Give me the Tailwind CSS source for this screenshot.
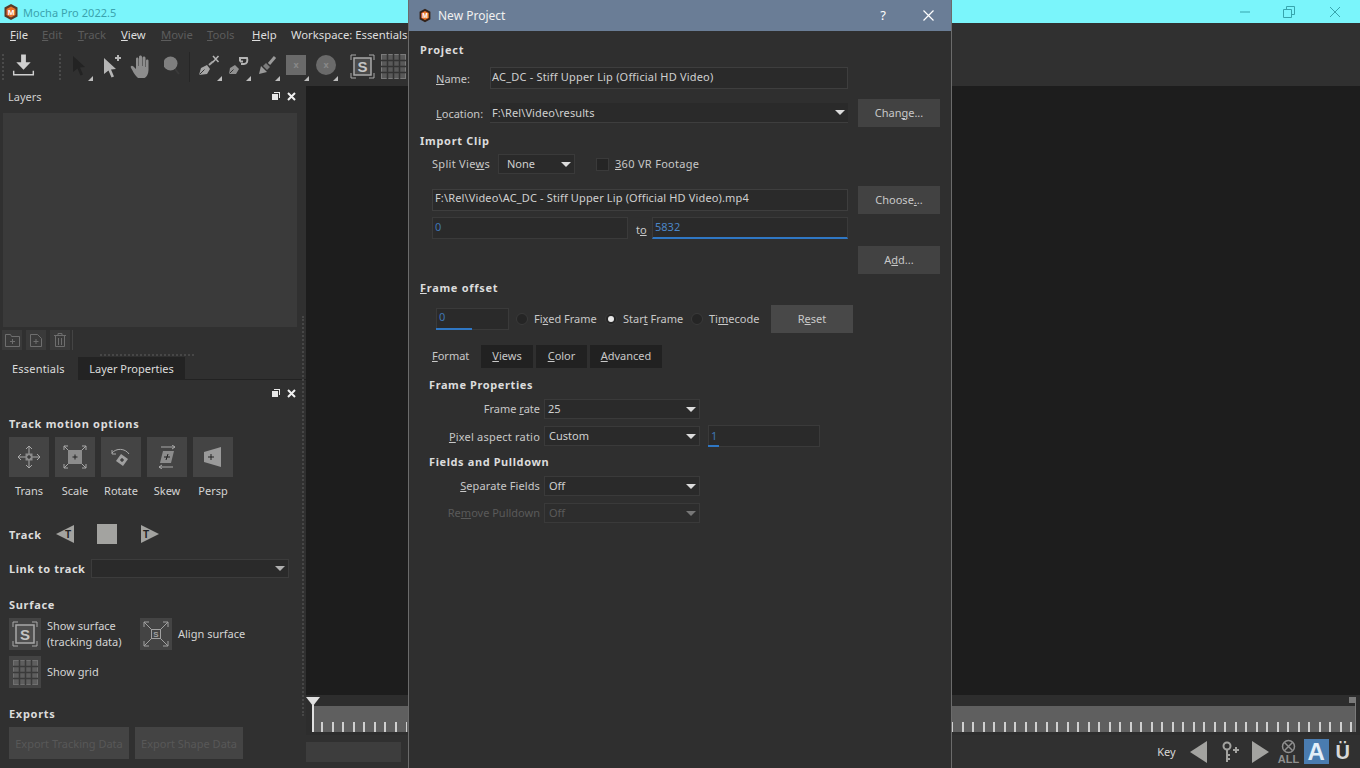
<!DOCTYPE html>
<html lang="en">
<head>
<meta charset="UTF-8">
<title>Mocha Pro 2022.5 - New Project</title>
<script src="https://cdn.jsdelivr.net/npm/@tailwindcss/browser@4"></script>
</head>
<body class="relative w-[1360px] h-[768px] overflow-hidden bg-[#303030] text-[11px] leading-none text-[#d4d4d4] font-['Noto_Sans','Open_Sans',sans-serif]">

<!-- Title bar -->
<div class="flex items-center h-[23px] bg-[#7af5fb] text-[#3aa3ae]">
  <svg class="ml-[3px] w-[16px] h-[18px]" viewBox="0 0 16 18"><path d="M8 1l6.5 3.5v9L8 17l-6.5-3.5v-9z" fill="#5a3a28"/><path d="M8 3.500l4.500 2.500v6L8 14.500l-4.500-2.500V6z" fill="#e8742c"/><text x="8" y="12" text-anchor="middle" font-size="8" font-weight="700" fill="#fff" font-family="Liberation Sans">M</text></svg>
  <span class="ml-[4px] text-[11px] tracking-[.05px] mt-[1px]">Mocha Pro 2022.5</span>
  <div class="ml-auto flex items-center">
    <svg class="w-[12px] h-[12px] mr-[32px]" viewBox="0 0 12 12"><path d="M1 6h10" stroke="#37a5ad"/></svg>
    <svg class="w-[12px] h-[12px] mr-[34px]" viewBox="0 0 12 12" fill="none" stroke="#37a5ad"><path d="M.5 3.500h8v8h-8zM3.500 3.500v-3h8v8h-3"/></svg>
    <svg class="w-[12px] h-[12px] mr-[19px]" viewBox="0 0 12 12"><path d="M1 1l10 10M11 1L1 11" stroke="#37a5ad"/></svg>
  </div>
</div>

<!-- Menu -->
<div class="flex items-center h-[24px] text-[11.300px] text-[#dedede]">
  <span class="ml-[10px] w-[32px]"><u>F</u>ile</span>
  <span class="w-[36px] text-[#5c5c5c]"><u>E</u>dit</span>
  <span class="w-[43px] text-[#5c5c5c]"><u>T</u>rack</span>
  <span class="w-[40px]"><u>V</u>iew</span>
  <span class="w-[46px] text-[#5c5c5c]"><u>M</u>ovie</span>
  <span class="w-[45px] text-[#5c5c5c]"><u>T</u>ools</span>
  <span class="w-[39px]"><u>H</u>elp</span>
  <span class="whitespace-nowrap">Workspace: Essentials</span>
</div>

<!-- Toolbar -->
<div class="flex items-center h-[39px]">
  <div class="ml-[2px] w-[3px] h-[26px] border-l-2 border-dotted border-[#4a4a4a]"></div>
  <svg class="ml-[7px] mb-[3px] w-[23px] h-[26px]" viewBox="0 0 24 26"><path d="M9.500 2h5v8h5l-7.500 8-7.500-8h5z" fill="#cfcfcf"/><path d="M1 19v5h22v-5h-1.500v3.500h-19V19z" fill="#cfcfcf"/></svg>
  <div class="ml-[24px] w-[3px] h-[26px] border-l-2 border-dotted border-[#4a4a4a]"></div>
  <div class="relative ml-[9px] w-[22px] h-[28px]">
    <svg class="w-[20px] h-[26px]" viewBox="0 0 20 26"><path d="M2 3l12 11-5 .5 3 7-2.500 1-3-7L2 19z" fill="#232323"/></svg>
    <div class="absolute right-0 bottom-0 w-0 h-0 border-l-[5px] border-l-transparent border-b-[5px] border-b-[#bdbdbd]"></div>
  </div>
  <svg class="ml-[9px] mb-[2px] w-[20px] h-[26px]" viewBox="0 0 20 26"><path d="M2 5l12 11-5 .5 3 7-2.500 1-3-7L2 21z" fill="#b5b5b5"/><path d="M13 5h6M16 2v6" stroke="#b5b5b5" stroke-width="2"/></svg>
  <svg class="ml-[7px] w-[24px] h-[26px]" viewBox="0 0 24 26"><path d="M7 22c-2-2-3-5-5-8-1-2 1-3 2.500-1.500L7 15V5c0-2 2.500-2 2.500 0v7h.5V3c0-2 3-2 3 0v9h.5V4c0-2 3-2 3 0v9h.5V7c0-2 3-2 2.500.5V16c0 4-2 7-4 8H9z" fill="#8d8d8d"/></svg>
  <svg class="ml-[11px] w-[18px] h-[26px]" viewBox="0 0 18 26"><circle cx="6.500" cy="9.500" r="7" fill="#7f7f7f"/><path d="M11 15l4 5" stroke="#3a3a3a" stroke-width="2"/></svg>
  <div class="ml-[7px] w-px h-[30px] bg-[#262626]"></div>
  <div class="relative ml-[8px] w-[24px] h-[28px]">
    <svg class="w-[24px] h-[26px]" viewBox="0 0 24 26"><path d="M1 22l2-7 6-3 3 4-3 5z" fill="#a5a5a5"/><path d="M1.500 21.500l5-5" stroke="#333"/><path d="M11 12l4-3.500" stroke="#a5a5a5" stroke-width="2"/><path d="M15 3l5.500 6M20.500 3L15 9" stroke="#b5b5b5" stroke-width="1.500"/></svg>
    <div class="absolute right-0 bottom-0 w-0 h-0 border-l-[5px] border-l-transparent border-b-[5px] border-b-[#bdbdbd]"></div>
  </div>
  <div class="relative ml-[5px] w-[24px] h-[28px]">
    <svg class="w-[24px] h-[26px]" viewBox="0 0 24 26"><path d="M2 21l1-6 5-3 4 4-3 5z" fill="#909090"/><path d="M2.500 20.500l4-4" stroke="#333"/><path d="M13 8.500V5h7c1 3 0 6-3 6h-3M13 8.500h3" fill="none" stroke="#b5b5b5" stroke-width="2"/></svg>
    <div class="absolute right-0 bottom-0 w-0 h-0 border-l-[5px] border-l-transparent border-b-[5px] border-b-[#bdbdbd]"></div>
  </div>
  <div class="relative ml-[5px] w-[24px] h-[28px]">
    <svg class="w-[24px] h-[26px]" viewBox="0 0 24 26"><path d="M3 21l2-8 6 6z" fill="#9a9a9a"/><path d="M7 13l3-3 4 4-3 3z" fill="#7c7c7c"/><path d="M13 11l6-7" stroke="#9a9a9a" stroke-width="3"/></svg>
    <div class="absolute right-0 bottom-0 w-0 h-0 border-l-[5px] border-l-transparent border-b-[5px] border-b-[#bdbdbd]"></div>
  </div>
  <div class="relative ml-[5px] w-[24px] h-[28px]">
    <div class="flex items-center justify-center ml-[1px] mt-[2px] w-[20px] h-[20px] bg-[#6a6a6a] text-[#878787] text-[9px] font-bold">x</div>
    <div class="absolute right-0 bottom-0 w-0 h-0 border-l-[5px] border-l-transparent border-b-[5px] border-b-[#bdbdbd]"></div>
  </div>
  <div class="relative ml-[5px] w-[24px] h-[28px]">
    <div class="flex items-center justify-center ml-[2px] mt-[2px] w-[20px] h-[20px] rounded-full bg-[#6a6a6a] text-[#878787] text-[9px] font-bold">x</div>
    <div class="absolute right-0 bottom-0 w-0 h-0 border-l-[5px] border-l-transparent border-b-[5px] border-b-[#bdbdbd]"></div>
  </div>
  <svg class="ml-[12px] w-[25px] h-[25px]" viewBox="0 0 25 25" fill="none" stroke="#a8a8a8"><path d="M1 6V1h5M19 1h5v5M24 19v5h-5M6 24H1v-5"/><rect x="4" y="4" width="17" height="17" fill="#4a4a4a" stroke-width="1.500"/><text x="12.500" y="18" text-anchor="middle" font-size="15" font-weight="700" fill="#c4c4c4" stroke="none" font-family="Liberation Sans">S</text></svg>
  <svg class="ml-[6px] w-[25px] h-[25px]" viewBox="0 0 25 25" fill="none" stroke="#7a7a7a"><rect x=".5" y=".5" width="24" height="24" fill="#595959"/><path d="M6.500 0v25M12.500 0v25M18.500 0v25M0 6.500h25M0 12.500h25M0 18.500h25" stroke="#333" stroke-width="1.500"/></svg>
</div>

<div class="flex h-[682px]">
  <!-- Left panel -->
  <div class="relative w-[306px] shrink-0">
    <div class="flex items-center h-[24px] pl-[8px] pb-[4px] text-[#cfcfcf]">
      <span>Layers</span>
      <svg class="ml-auto w-[8px] h-[8px]" viewBox="0 0 8 8"><path d="M2 0h6v6H7V1H2z M0 2h6v6H0z" fill="#e8e8e8"/></svg>
      <svg class="ml-[7px] mr-[10px] w-[9px] h-[9px]" viewBox="0 0 9 9"><path d="M1 1l7 7M8 1L1 8" stroke="#f0f0f0" stroke-width="2"/></svg>
    </div>
    <div class="ml-[3px] mt-[3px] w-[294px] h-[214px] bg-[#3a3a3a]"></div>
    <div class="flex items-center gap-[4px] ml-[2px] mt-[3px] h-[20px]">
      <div class="flex items-center justify-center w-[20px] h-[20px] bg-[#3a3a3a]"><svg class="w-[15px] h-[13px]" viewBox="0 0 15 13" fill="none" stroke="#6e6e6e"><path d="M.5 12.500v-12h5l1 2h8v10zM7.500 5v5M5 7.500h5"/></svg></div>
      <div class="flex items-center justify-center w-[20px] h-[20px] bg-[#3a3a3a]"><svg class="w-[12px] h-[13px]" viewBox="0 0 12 13" fill="none" stroke="#6e6e6e"><path d="M.5.500h7l4 4v8H.5zM6 5v5M3.500 7.500h5"/></svg></div>
      <div class="flex items-center justify-center w-[20px] h-[20px] bg-[#3a3a3a]"><svg class="w-[12px] h-[14px]" viewBox="0 0 12 14" fill="none" stroke="#6e6e6e"><path d="M0 2.500h12M4 2V.500h4V2M1.500 3v10.500h9V3M4.500 5v7M7.500 5v7"/></svg></div>
      <div class="-ml-[2px] w-px h-[20px] bg-[#444]"></div>
    </div>
    <div class="ml-[100px] mt-[4px] w-[94px] border-t-2 border-dotted border-[#474747]"></div>
    <div class="flex items-stretch mt-[1px] h-[23px]">
      <div class="flex items-center pl-[12px] w-[78px] text-[#dcdcdc] tracking-[.2px]">Essentials</div>
      <div class="flex items-center justify-center w-[107px] bg-[#232323] text-[#dcdcdc]">Layer Properties</div>
      <div class="flex-1 border-b border-[#222]"></div>
    </div>
    <div class="flex items-center h-[24px] mt-[1px]">
      <svg class="ml-auto w-[8px] h-[8px]" viewBox="0 0 8 8"><path d="M2 0h6v6H7V1H2z M0 2h6v6H0z" fill="#e8e8e8"/></svg>
      <svg class="ml-[7px] mr-[10px] w-[9px] h-[9px]" viewBox="0 0 9 9"><path d="M1 1l7 7M8 1L1 8" stroke="#f0f0f0" stroke-width="2"/></svg>
    </div>
    <div class="ml-[9px] mt-[13px] font-bold text-[#dcdcdc] tracking-[.7px]">Track motion options</div>
    <div class="flex gap-[6px] ml-[9px] mt-[8px]">
      <div class="flex flex-col items-center w-[40px]">
        <div class="flex items-center justify-center w-[40px] h-[40px] bg-[#444]"><svg class="w-[24px] h-[24px]" viewBox="0 0 24 24" fill="none" stroke="#a8a8a8"><path d="M12 1v22M1 12h22M9 4l3-3 3 3M9 20l3 3 3-3M4 9l-3 3 3 3M20 9l3 3-3 3"/><rect x="8.500" y="8.500" width="7" height="7" fill="#8c8c8c" stroke="none"/><path d="M10 12h4M12 10v4" stroke="#222"/></svg></div>
        <span class="mt-[8px]">Trans</span>
      </div>
      <div class="flex flex-col items-center w-[40px]">
        <div class="flex items-center justify-center w-[40px] h-[40px] bg-[#444]"><svg class="w-[24px] h-[24px]" viewBox="0 0 24 24" fill="none" stroke="#a8a8a8"><path d="M1 1l5 5M23 1l-5 5M1 23l5-5M23 23l-5-5M1 5V1h4M19 1h4v4M1 19v4h4M23 19v4h-4"/><rect x="5" y="5" width="14" height="14" fill="#8c8c8c" stroke="none"/><path d="M9.500 12h5M12 9.500v5" stroke="#222"/></svg></div>
        <span class="mt-[8px]">Scale</span>
      </div>
      <div class="flex flex-col items-center w-[40px]">
        <div class="flex items-center justify-center w-[40px] h-[40px] bg-[#444]"><svg class="w-[24px] h-[24px]" viewBox="0 0 24 24" fill="none" stroke="#a8a8a8"><path d="M3 8c4-5 13-5 17 1M3 5v4h4"/><path d="M12 9l7 5-5 7-7-5z" fill="#a0a0a0" stroke="none"/><path d="M11 15h4M13 13v4" stroke="#222"/></svg></div>
        <span class="mt-[8px]">Rotate</span>
      </div>
      <div class="flex flex-col items-center w-[40px]">
        <div class="flex items-center justify-center w-[40px] h-[40px] bg-[#444]"><svg class="w-[24px] h-[24px]" viewBox="0 0 24 24" fill="none" stroke="#a8a8a8"><path d="M6 2h14M17 0l3 2-3 2M18 22H4M7 20l-3 2 3 2"/><path d="M8 6h11l-3 12H5z" fill="#8c8c8c" stroke="none"/><path d="M9 12h6M13 9l-2 6" stroke="#222"/></svg></div>
        <span class="mt-[8px]">Skew</span>
      </div>
      <div class="flex flex-col items-center w-[40px]">
        <div class="flex items-center justify-center w-[40px] h-[40px] bg-[#444]"><svg class="w-[20px] h-[20px]" viewBox="0 0 20 20"><path d="M1 5l17-5v20L1 15z" fill="#9a9a9a"/><path d="M5 10h6M8 7v6" stroke="#222"/></svg></div>
        <span class="mt-[8px]">Persp</span>
      </div>
    </div>
    <div class="flex items-center ml-[9px] mt-[28px] h-[20px]">
      <span class="w-[47px] font-bold text-[#dcdcdc] tracking-[.6px]">Track</span>
      <svg class="w-[19px] h-[20px]" viewBox="0 0 19 20"><path d="M0 10L18 1v18z" fill="#a3a3a0"/><text x="12" y="14" text-anchor="middle" font-size="10" font-weight="700" fill="#222" font-family="Liberation Sans">T</text></svg>
      <div class="ml-[22px] w-[20px] h-[20px] bg-[#a3a3a0]"></div>
      <svg class="ml-[23px] w-[19px] h-[20px]" viewBox="0 0 19 20"><path d="M19 10L1 1v18z" fill="#a3a3a0"/><text x="6" y="14" text-anchor="middle" font-size="10" font-weight="700" fill="#222" font-family="Liberation Sans">T</text></svg>
    </div>
    <div class="flex items-center ml-[9px] mt-[15px] h-[19px]">
      <span class="w-[82px] font-bold text-[#dcdcdc] tracking-[.55px] whitespace-nowrap">Link to track</span>
      <div class="flex items-center justify-end w-[198px] h-[19px] bg-[#2a2a2a] border border-[#3c3c3c] pr-[3px]">
        <div class="w-0 h-0 border-x-[5px] border-x-transparent border-t-[5px] border-t-[#b0b0b0]"></div>
      </div>
    </div>
    <div class="ml-[9px] mt-[21px] font-bold text-[#dcdcdc] tracking-[.7px]">Surface</div>
    <div class="flex items-center ml-[9px] mt-[8px]">
      <div class="flex items-center justify-center w-[32px] h-[32px] bg-[#444]"><svg class="w-[26px] h-[26px]" viewBox="0 0 26 26" fill="none" stroke="#a8a8a8"><path d="M1 6V1h5M20 1h5v5M25 20v5h-5M6 25H1v-5"/><rect x="4" y="4" width="18" height="18" fill="#4f4f4f" stroke-width="1.500"/><text x="13" y="19" text-anchor="middle" font-size="15" font-weight="700" fill="#c4c4c4" stroke="none" font-family="Liberation Sans">S</text></svg></div>
      <div class="ml-[6px] w-[93px] leading-[16px]">Show surface<br>(tracking data)</div>
      <div class="flex items-center justify-center w-[32px] h-[32px] bg-[#444]"><svg class="w-[26px] h-[26px]" viewBox="0 0 26 26" fill="none" stroke="#a0a0a0"><path d="M1 1l7 7M25 1l-7 7M1 25l7-7M25 25l-7-7M1 6V1h5M20 1h5v5M1 20v5h5M25 20v5h-5"/><rect x="8.500" y="8.500" width="9" height="9"/><text x="13" y="16" text-anchor="middle" font-size="8" font-weight="700" fill="#a0a0a0" stroke="none" font-family="Liberation Sans">S</text></svg></div>
      <span class="ml-[6px] mb-[2px]">Align surface</span>
    </div>
    <div class="flex items-center ml-[9px] mt-[6px]">
      <div class="flex items-center justify-center w-[32px] h-[32px] bg-[#444]"><svg class="w-[25px] h-[25px]" viewBox="0 0 25 25" fill="none" stroke="#707070"><rect x=".5" y=".5" width="24" height="24" fill="#5e5e5e"/><path d="M6.500 0v25M12.500 0v25M18.500 0v25M0 6.500h25M0 12.500h25M0 18.500h25" stroke="#3a3a3a" stroke-width="1.500"/></svg></div>
      <span class="ml-[6px] mb-[2px]">Show grid</span>
    </div>
    <div class="ml-[9px] mt-[20px] font-bold text-[#dcdcdc] tracking-[.7px]">Exports</div>
    <div class="flex gap-[6px] ml-[9px] mt-[8px]">
      <div class="flex items-center justify-center w-[120px] h-[32px] bg-[#444] text-[#585858]">Export Tracking Data</div>
      <div class="flex items-center justify-center w-[108px] h-[32px] bg-[#444] text-[#585858]">Export Shape Data</div>
    </div>
    <div class="absolute right-[2px] top-[230px] h-[400px] border-r-2 border-dotted border-[#474747]"></div>
  </div>

  <!-- Viewer and timeline -->
  <div class="flex flex-col flex-1">
    <div class="h-[609px] bg-[#1d1d1d]"></div>
    <div class="relative h-[40px] bg-[#2d2d2d]">
      <div class="absolute left-[7px] top-[11px] right-[5px] h-[26px] bg-[#5f5f5f] bg-[repeating-linear-gradient(90deg,transparent_0_8.500px,#cfcfcf_8.500px_10.500px)] bg-[length:100%_10px] bg-bottom bg-no-repeat"></div>
      <div class="absolute left-0 top-[2px] w-0 h-0 border-x-[7px] border-x-transparent border-t-[9px] border-t-[#e0e0e0]"></div>
      <div class="absolute left-[6px] top-[10px] w-[2px] h-[27px] bg-[#e0e0e0]"></div>
      <div class="absolute right-[4px] top-[2px] w-[7px] h-[6px] bg-[#7a7a7a]"></div>
      <div class="absolute right-[4px] top-[8px] w-px h-[29px] bg-[#7a7a7a]"></div>
    </div>
    <div class="flex items-center h-[33px]">
      <div class="w-[95px] h-[20px] bg-[#3d3d3d]"></div>
      <span class="ml-auto text-[#d8d8d8]">Key</span>
      <div class="ml-[14px] w-0 h-0 border-y-[11px] border-y-transparent border-r-[17px] border-r-[#a3a3a0]"></div>
      <svg class="ml-[15px] w-[17px] h-[22px]" viewBox="0 0 17 22" fill="none" stroke="#a3a3a0" stroke-width="2"><circle cx="5" cy="5" r="3.500"/><path d="M5 9v12M5 14h3M5 18h3M11 9h6M14 6v6"/></svg>
      <div class="ml-[13px] w-0 h-0 border-y-[11px] border-y-transparent border-l-[17px] border-l-[#a3a3a0]"></div>
      <div class="ml-[10px] flex flex-col items-center w-[20px]">
        <svg class="w-[15px] h-[15px]" viewBox="0 0 15 15" fill="none" stroke="#8f8f8f" stroke-width="1.500"><circle cx="7.500" cy="7.500" r="6"/><path d="M3.500 3.500l8 8M11.500 3.500l-8 8"/></svg>
        <span class="text-[11px] font-bold text-[#8f8f8f] font-['Liberation_Sans']">ALL</span>
      </div>
      <div class="ml-[5px] flex items-center justify-center w-[25px] h-[25px] bg-[#4a7cb0] text-[#e4eef8] text-[24px] font-bold font-['Liberation_Sans']">A</div>
      <span class="ml-[7px] mr-[10px] text-[20px] font-bold text-[#d8d8d8] font-['Liberation_Sans']">Ü</span>
    </div>
  </div>
</div>

<!-- New Project dialog -->
<div class="absolute left-[408px] top-0 w-[544px] h-[768px] bg-[#2f2f2f] border-x border-[#6b6b6b] text-[#c8c8c8]">
  <div class="flex items-center h-[31px] bg-[#6a7d96] text-white">
    <svg class="ml-[9px] w-[14px] h-[15px]" viewBox="0 0 16 18"><path d="M8 1l6.500 3.500v9L8 17l-6.500-3.500v-9z" fill="#33231a"/><path d="M8 3.500l4.500 2.500v6L8 14.500l-4.500-2.500V6z" fill="#e8742c"/><text x="8" y="12" text-anchor="middle" font-size="8" font-weight="700" fill="#fff" font-family="Liberation Sans">M</text></svg>
    <span class="ml-[6px] text-[12px] text-[#f0f0f0]">New Project</span>
    <span class="ml-auto text-[13px]">?</span>
    <svg class="ml-[37px] mr-[17px] w-[11px] h-[11px]" viewBox="0 0 11 11"><path d="M.5.500l10 10M10.500.500l-10 10" stroke="#fff" stroke-width="1.200"/></svg>
  </div>
  <div class="pl-[11px]">
    <div class="flex items-center mt-[11px] h-[16px] pb-[2px] font-bold text-[#dcdcdc] tracking-[.8px]">Project</div>

    <div class="flex items-center mt-[9px] h-[22px]">
      <span class="ml-[16px] w-[54px]"><u>N</u>ame:</span>
      <div class="flex items-center pl-[1px] pb-[3px] w-[358px] h-[22px] bg-[#2a2a2a] border border-[#3e3e3e] text-[#d0d0d0] tracking-[.19px]">AC_DC - Stiff Upper Lip (Official HD Video)</div>
    </div>

    <div class="flex items-center mt-[10px] h-[28px]">
      <span class="ml-[16px] w-[54px]"><u>L</u>ocation:</span>
      <div class="flex items-center justify-between pl-[2px] pr-[3px] w-[358px] h-[20px] bg-[#2a2a2a] border-b border-[#3e3e3e] text-[#d0d0d0] tracking-[.1px]">F:\Rel\Video\results<div class="w-0 h-0 border-x-[5px] border-x-transparent border-t-[5px] border-t-[#dcdcdc]"></div></div>
      <div class="flex items-center justify-center ml-[10px] pb-[2px] w-[82px] h-[28px] bg-[#424242]"><span>Chan<u>g</u>e...</span></div>
    </div>

    <div class="flex items-center mt-[6px] h-[16px] pb-[2px] font-bold text-[#dcdcdc] tracking-[.7px]">Import Clip</div>

    <div class="flex items-center mt-[5px] h-[20px]">
      <span class="ml-[12px] w-[66px] mb-[2px] tracking-[.3px]">Split Vie<u>w</u>s</span>
      <div class="flex items-center justify-between pl-[8px] pb-[2px] pr-[3px] w-[77px] h-[20px] bg-[#2a2a2a] border border-[#3a3a3a] text-[#d0d0d0]"><span>None</span><div class="w-0 h-0 border-x-[5px] border-x-transparent border-t-[5px] border-t-[#dcdcdc] mt-[2px]"></div></div>
      <div class="ml-[21px] w-[13px] h-[13px] bg-[#252525] border border-[#3a3a3a]"></div>
      <span class="ml-[6px] mb-[2px] tracking-[.3px]"><u>3</u>60 VR Footage</span>
    </div>

    <div class="flex items-center mt-[12px] h-[28px]">
      <div class="flex items-center ml-[12px] pl-[2px] pb-[6px] w-[416px] h-[22px] bg-[#2a2a2a] border border-[#3e3e3e] text-[#d0d0d0] tracking-[.14px]">F:\Rel\Video\AC_DC - Stiff Upper Lip (Official HD Video).mp4</div>
      <div class="flex items-center justify-center ml-[10px] pb-[2px] w-[82px] h-[28px] bg-[#424242]"><span>Choose<u>.</u>..</span></div>
    </div>

    <div class="flex items-center mt-[3px] h-[22px]">
      <div class="flex items-center ml-[12px] pl-[2px] pb-[3px] w-[196px] h-[22px] bg-[#2a2a2a] border border-[#3a3a3a] text-[#3f76b4]">0</div>
      <span class="ml-[8px] w-[16px] mt-[3px]">t<u>o</u></span>
      <div class="flex items-center pl-[2px] pb-[2px] w-[196px] h-[22px] bg-[#2a2a2a] border border-b-2 border-[#3a3a3a] border-b-[#2f77c4] text-[#4a86c8]">5832</div>
    </div>

    <div class="flex justify-end mt-[7px] h-[28px] pr-[11px]">
      <div class="flex items-center justify-center pb-[2px] w-[82px] h-[28px] bg-[#424242]"><span>A<u>d</u>d...</span></div>
    </div>

    <div class="flex items-center mt-[6px] h-[16px] pb-[2px] font-bold text-[#dcdcdc] tracking-[.7px]"><span><u>F</u>rame offset</span></div>

    <div class="flex items-center mt-[9px] h-[28px]">
      <div class="relative flex items-center ml-[16px] pl-[2px] pb-[6px] w-[73px] h-[22px] bg-[#2a2a2a] border border-[#3a3a3a] text-[#3f76b4]">0<div class="absolute -left-px -bottom-px w-[36px] h-[2px] bg-[#2f77c4]"></div></div>
      <div class="ml-[7px] w-[12px] h-[12px] rounded-full bg-[#252525] border border-[#3a3a3a]"></div>
      <span class="ml-[6px] w-[71px] mb-[2px]">Fi<u>x</u>ed Frame</span>
      <div class="flex items-center justify-center w-[12px] h-[12px] rounded-full bg-[#252525] border border-[#3a3a3a]"><div class="w-[6px] h-[6px] rounded-full bg-[#e8e8e8]"></div></div>
      <span class="ml-[6px] w-[68px] mb-[2px]">Star<u>t</u> Frame</span>
      <div class="w-[12px] h-[12px] rounded-full bg-[#252525] border border-[#3a3a3a]"></div>
      <span class="ml-[6px] w-[62px] mb-[2px]">Ti<u>m</u>ecode</span>
      <div class="flex items-center justify-center pb-[2px] w-[82px] h-[28px] bg-[#484848]"><span>R<u>e</u>set</span></div>
    </div>

    <div class="flex items-stretch mt-[12px] h-[23px] gap-[3px] pb-0">
      <div class="flex items-center ml-[12px] pb-[2px] w-[46px]"><span><u>F</u>ormat</span></div>
      <div class="flex items-center justify-center pb-[2px] w-[52px] bg-[#212121]"><span><u>V</u>iews</span></div>
      <div class="flex items-center justify-center pb-[2px] w-[51px] bg-[#212121]"><span><u>C</u>olor</span></div>
      <div class="flex items-center justify-center pb-[2px] w-[72px] bg-[#212121]"><span><u>A</u>dvanced</span></div>
    </div>

    <div class="flex items-center ml-[9px] mt-[9px] h-[16px] pb-[2px] font-bold text-[#dcdcdc] tracking-[.6px]">Frame Properties</div>

    <div class="flex items-center mt-[6px] h-[20px]">
      <span class="w-[120px] text-right mb-[2px]">Frame <u>r</u>ate</span>
      <div class="flex items-center justify-between ml-[4px] pl-[3px] pr-[3px] pb-[2px] w-[156px] h-[20px] bg-[#2a2a2a] border border-[#3a3a3a] text-[#d0d0d0]"><span>25</span><div class="w-0 h-0 mt-[2px] border-x-[5px] border-x-transparent border-t-[5px] border-t-[#dcdcdc]"></div></div>
    </div>

    <div class="flex items-center mt-[6px] h-[22px]">
      <span class="w-[120px] text-right tracking-[.2px]"><u>P</u>ixel aspect ratio</span>
      <div class="flex items-center justify-between ml-[4px] pl-[4px] pr-[3px] pb-[2px] w-[156px] h-[20px] bg-[#2a2a2a] border border-[#3a3a3a] text-[#d0d0d0]"><span>Custom</span><div class="w-0 h-0 mt-[2px] border-x-[5px] border-x-transparent border-t-[5px] border-t-[#dcdcdc]"></div></div>
      <div class="relative flex items-center ml-[8px] pl-[2px] pb-[2px] w-[112px] h-[22px] bg-[#2a2a2a] border border-[#3a3a3a] text-[#3f76b4]">1<div class="absolute -left-px -bottom-px w-[11px] h-[2px] bg-[#2f77c4]"></div></div>
    </div>

    <div class="flex items-center ml-[9px] mt-[7px] h-[16px] pb-[2px] font-bold text-[#dcdcdc] tracking-[.6px]">Fields and Pulldown</div>

    <div class="flex items-center mt-[6px] h-[20px]">
      <span class="w-[120px] text-right mb-[2px] tracking-[.1px]"><u>S</u>eparate Fields</span>
      <div class="flex items-center justify-between ml-[4px] pl-[4px] pr-[3px] pb-[2px] w-[156px] h-[20px] bg-[#2a2a2a] border border-[#3a3a3a] text-[#d0d0d0]"><span>Off</span><div class="w-0 h-0 mt-[2px] border-x-[5px] border-x-transparent border-t-[5px] border-t-[#dcdcdc]"></div></div>
    </div>

    <div class="flex items-center mt-[7px] h-[20px] text-[#5a5a5a]">
      <span class="w-[120px] text-right mb-[2px]">Re<u>m</u>ove Pulldown</span>
      <div class="flex items-center justify-between ml-[4px] pl-[4px] pr-[3px] pb-[2px] w-[156px] h-[20px] bg-[#2d2d2d] border border-[#3a3a3a]"><span>Off</span><div class="w-0 h-0 mt-[2px] border-x-[5px] border-x-transparent border-t-[5px] border-t-[#777]"></div></div>
    </div>
  </div>
</div>
</body>
</html>
